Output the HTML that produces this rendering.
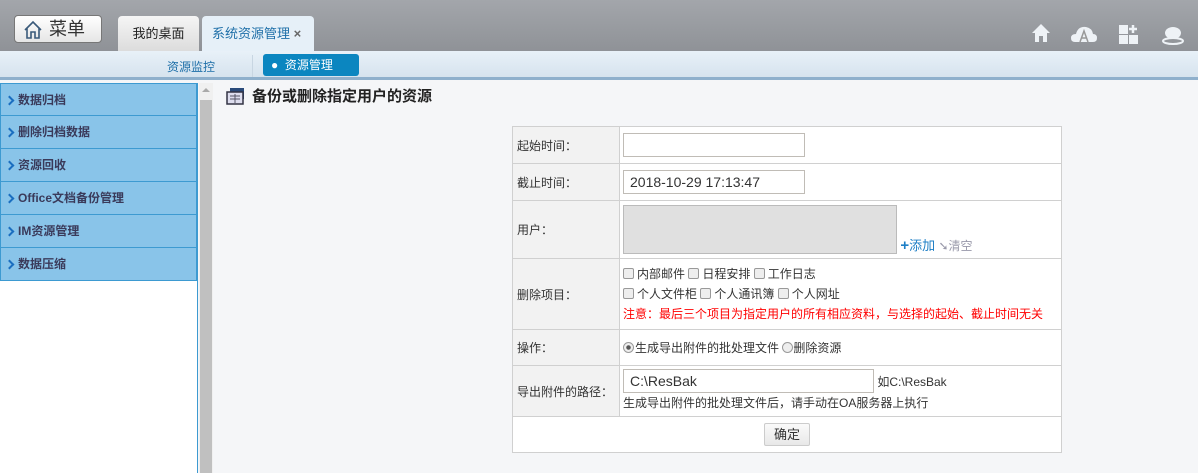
<!DOCTYPE html>
<html><head><meta charset="utf-8"><style>
*{margin:0;padding:0;box-sizing:border-box}
body{width:1198px;height:473px;overflow:hidden;font-family:"Liberation Sans","Noto Sans CJK SC",sans-serif;font-size:12px;color:#333;background:#f5f6f8;position:relative}
.top{position:absolute;left:0;top:0;width:1198px;height:51px;background:linear-gradient(#a3a6ab,#8f9297)}
.menu{position:absolute;left:14px;top:15px;width:88px;height:28px;border-radius:4px;background:linear-gradient(#fff,#e6e6e6);border:1px solid #777;font-size:18px;color:#333;line-height:26px;padding-left:34px}
.tab{position:absolute;top:16px;height:35px;border-radius:4px 4px 0 0;font-size:13px;line-height:36px;text-align:center}
.sub{position:absolute;left:0;top:51px;width:1198px;height:29px;background:linear-gradient(#e8f1f8,#d6e3ee);border-bottom:3px solid #8fb0cc}
.side{position:absolute;left:0;top:83px;width:198px;height:390px;background:#fff;border-right:1px solid #3d9ad1}
.item{height:33px;background:#89c4e9;border:1px solid #3d9ad1;border-top:none;font-weight:bold;color:#3a3a5a;line-height:32px;padding-left:17px;position:relative}
.item:before{content:"";position:absolute;left:5px;top:13px;width:5px;height:5px;border-right:2px solid #1a6ec0;border-top:2px solid #1a6ec0;transform:rotate(45deg)}
.sb{position:absolute;left:199px;top:83px;width:14px;height:390px;background:#f0f0f0}
table{position:absolute;left:512px;top:126px;width:550px;border-collapse:collapse;background:#fff}
td{border:1px solid #d0d0d0;vertical-align:middle}
td.l{width:107px;background:#f2f2f2;padding-left:4px}
td.r{padding-left:3px}
input.t{height:24px;border:1px solid #c0bcb6;font-size:14px;padding-left:6px;font-family:"Liberation Sans",sans-serif;color:#333}
.cb{display:inline-block;width:11px;height:11px;border:1px solid #999;border-radius:2px;background:#eee;vertical-align:-1px;margin-right:3px}
</style></head><body>
<div class="top">
<div class="menu"><svg style="position:absolute;left:8px;top:4px" width="20" height="20" viewBox="0 0 20 20"><path d="M2 10 L10 2 L18 10 M4 8 V18 H8 V12 H12 V18 H16 V8" fill="none" stroke="#3a5a7a" stroke-width="1.6"/></svg>菜单</div>
<div class="tab" style="left:118px;width:81px;background:linear-gradient(#f5f5f5,#dcdcdc);color:#222">我的桌面</div>
<div class="tab" style="left:202px;width:112px;background:#e6f0f8;color:#1e6fa8;text-align:left;padding-left:10px">系统资源管理 <span style="color:#666;font-weight:bold">×</span></div>
<svg style="position:absolute;left:1030px;top:22px" width="160" height="24" viewBox="0 0 160 24">
<path d="M2 11 L11 2 L20 11 H17 V20 H13 V14 H9 V20 H5 V11Z" fill="#eef2f6"/>
<path d="M45 20 Q41 20 41 16 Q41 12 46 12 Q48 4 56 5 Q62 6 63 12 Q67 12 67 16 Q67 20 63 20Z" fill="#eef2f6"/><path d="M50 20 L54 9 L58 20 M52 16 H56" stroke="#999" stroke-width="1.5" fill="none"/>
<rect x="89" y="3" width="9" height="9" fill="#eef2f6"/><rect x="89" y="13" width="9" height="9" fill="#eef2f6"/><rect x="99" y="13" width="9" height="9" fill="#eef2f6"/><path d="M103 3 V11 M99 7 H107" stroke="#eef2f6" stroke-width="2.5"/>
<ellipse cx="143" cy="11" rx="8" ry="6" fill="#eef2f6"/><ellipse cx="143" cy="19" rx="10" ry="3" fill="none" stroke="#eef2f6" stroke-width="2"/>
</svg>
</div>
<div class="sub">
<div style="position:absolute;left:167px;top:7px;color:#1e6fa8">资源监控</div>
<div style="position:absolute;left:252px;top:4px;width:1px;height:22px;background:#c8d6e2"></div>
<div style="position:absolute;left:263px;top:3px;width:96px;height:22px;background:#0b86c0;border-radius:3px;color:#fff;line-height:22px;padding-left:8px">● &nbsp;资源管理</div>
</div>
<div class="side">
<div class="item" style="border-top:1px solid #3d9ad1">数据归档</div><div class="item">删除归档数据</div><div class="item">资源回收</div><div class="item">Office文档备份管理</div><div class="item">IM资源管理</div><div class="item">数据压缩</div>
</div>
<div class="sb"><div style="position:absolute;top:17px;left:1px;width:12px;height:373px;background:#c0c0c0"></div><div style="position:absolute;left:3px;top:5px;border:4px solid transparent;border-bottom-color:#aaa;border-top:none"></div></div>
<svg style="position:absolute;left:226px;top:87px" width="20" height="18" viewBox="0 0 20 18"><rect x="4" y="1" width="14" height="11" fill="#2a4a7a"/><rect x="1" y="5" width="16" height="12" fill="#dde" stroke="#334" stroke-width="1.5"/><path d="M4 9 H14 M4 12 H14 M9 7 V16" stroke="#556" /></svg>
<div style="position:absolute;left:252px;top:85px;font-size:15px;font-weight:bold;color:#222">备份或删除指定用户的资源</div>
<table>
<tr style="height:37px"><td class="l">起始时间：</td><td class="r"><input class="t" style="width:182px"></td></tr>
<tr style="height:37px"><td class="l">截止时间：</td><td class="r"><input class="t" style="width:182px" value="2018-10-29 17:13:47"></td></tr>
<tr style="height:58px"><td class="l">用户：</td><td class="r"><div style="display:inline-block;width:274px;height:49px;background:#e0e0e0;border:1px solid #bbb;vertical-align:bottom"></div> <span style="color:#1e7fc6;font-size:13px"><b style="font-size:15px">+</b>添加</span> <span style="color:#99a">➘清空</span></td></tr>
<tr style="height:71px"><td class="l">删除项目：</td><td class="r" style="line-height:20px"><span class="cb"></span>内部邮件 <span class="cb"></span>日程安排 <span class="cb"></span>工作日志<br><span class="cb"></span>个人文件柜 <span class="cb"></span>个人通讯簿 <span class="cb"></span>个人网址<br><span style="color:#f00">注意：最后三个项目为指定用户的所有相应资料，与选择的起始、截止时间无关</span></td></tr>
<tr style="height:36px"><td class="l">操作：</td><td class="r"><span class="cb" style="border-radius:50%;background:radial-gradient(#555 30%,#eee 40%);margin-right:1px"></span>生成导出附件的批处理文件 <span class="cb" style="border-radius:50%;margin-right:0"></span>删除资源</td></tr>
<tr style="height:51px"><td class="l">导出附件的路径：</td><td class="r" style="line-height:20px"><input class="t" style="width:251px" value="C:\ResBak"> 如C:\ResBak<br>生成导出附件的批处理文件后，请手动在OA服务器上执行</td></tr>
<tr style="height:36px"><td colspan="2" style="text-align:center"><span style="display:inline-block;width:46px;height:23px;border:1px solid #ccc;border-radius:2px;background:linear-gradient(#fafafa,#e8e8e8);line-height:21px;font-size:13px">确定</span></td></tr>
</table>
</body></html>
